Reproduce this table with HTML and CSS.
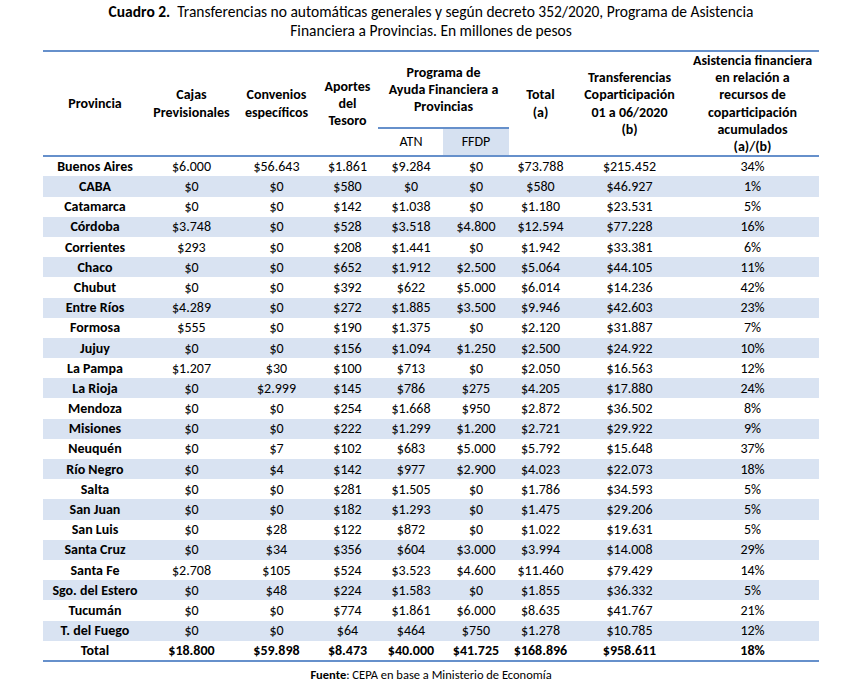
FILE: index.html
```html
<!DOCTYPE html>
<html lang="es">
<head>
<meta charset="utf-8">
<title>Cuadro 2</title>
<link rel="stylesheet" href="styles.css">
</head>
<body>
<div class="title">
  <div><b>Cuadro 2.</b>&nbsp; Transferencias no automáticas generales y según decreto 352/2020, Programa de Asistencia</div>
  <div>Financiera a Provincias. En millones de pesos</div>
</div>
<table class="data">
  <colgroup>
    <col class="c-prov"><col class="c-cajas"><col class="c-conv"><col class="c-apor"><col class="c-atn"><col class="c-ffdp"><col class="c-tot"><col class="c-transf"><col class="c-asis">
  </colgroup>
  <thead>
    <tr class="h1">
      <th rowspan="2">Provincia</th>
      <th rowspan="2">Cajas<br>Previsionales</th>
      <th rowspan="2">Convenios<br>específicos</th>
      <th rowspan="2">Aportes<br>del<br>Tesoro</th>
      <th colspan="2" class="group">Programa de<br>Ayuda Financiera a<br>Provincias</th>
      <th rowspan="2">Total<br>(a)</th>
      <th rowspan="2">Transferencias<br>Coparticipación<br>01 a 06/2020<br>(b)</th>
      <th rowspan="2">Asistencia financiera<br>en relación a<br>recursos de<br>coparticipación<br>acumulados<br>(a)/(b)</th>
    </tr>
    <tr class="h2">
      <th class="sub">ATN</th>
      <th class="sub shade">FFDP</th>
    </tr>
  </thead>
  <tbody>
    <tr><th>Buenos Aires</th><td>$6.000</td><td>$56.643</td><td>$1.861</td><td>$9.284</td><td>$0</td><td>$73.788</td><td>$215.452</td><td>34%</td></tr>
    <tr><th>CABA</th><td>$0</td><td>$0</td><td>$580</td><td>$0</td><td>$0</td><td>$580</td><td>$46.927</td><td>1%</td></tr>
    <tr><th>Catamarca</th><td>$0</td><td>$0</td><td>$142</td><td>$1.038</td><td>$0</td><td>$1.180</td><td>$23.531</td><td>5%</td></tr>
    <tr><th>Córdoba</th><td>$3.748</td><td>$0</td><td>$528</td><td>$3.518</td><td>$4.800</td><td>$12.594</td><td>$77.228</td><td>16%</td></tr>
    <tr><th>Corrientes</th><td>$293</td><td>$0</td><td>$208</td><td>$1.441</td><td>$0</td><td>$1.942</td><td>$33.381</td><td>6%</td></tr>
    <tr><th>Chaco</th><td>$0</td><td>$0</td><td>$652</td><td>$1.912</td><td>$2.500</td><td>$5.064</td><td>$44.105</td><td>11%</td></tr>
    <tr><th>Chubut</th><td>$0</td><td>$0</td><td>$392</td><td>$622</td><td>$5.000</td><td>$6.014</td><td>$14.236</td><td>42%</td></tr>
    <tr><th>Entre Ríos</th><td>$4.289</td><td>$0</td><td>$272</td><td>$1.885</td><td>$3.500</td><td>$9.946</td><td>$42.603</td><td>23%</td></tr>
    <tr><th>Formosa</th><td>$555</td><td>$0</td><td>$190</td><td>$1.375</td><td>$0</td><td>$2.120</td><td>$31.887</td><td>7%</td></tr>
    <tr><th>Jujuy</th><td>$0</td><td>$0</td><td>$156</td><td>$1.094</td><td>$1.250</td><td>$2.500</td><td>$24.922</td><td>10%</td></tr>
    <tr><th>La Pampa</th><td>$1.207</td><td>$30</td><td>$100</td><td>$713</td><td>$0</td><td>$2.050</td><td>$16.563</td><td>12%</td></tr>
    <tr><th>La Rioja</th><td>$0</td><td>$2.999</td><td>$145</td><td>$786</td><td>$275</td><td>$4.205</td><td>$17.880</td><td>24%</td></tr>
    <tr><th>Mendoza</th><td>$0</td><td>$0</td><td>$254</td><td>$1.668</td><td>$950</td><td>$2.872</td><td>$36.502</td><td>8%</td></tr>
    <tr><th>Misiones</th><td>$0</td><td>$0</td><td>$222</td><td>$1.299</td><td>$1.200</td><td>$2.721</td><td>$29.922</td><td>9%</td></tr>
    <tr><th>Neuquén</th><td>$0</td><td>$7</td><td>$102</td><td>$683</td><td>$5.000</td><td>$5.792</td><td>$15.648</td><td>37%</td></tr>
    <tr><th>Río Negro</th><td>$0</td><td>$4</td><td>$142</td><td>$977</td><td>$2.900</td><td>$4.023</td><td>$22.073</td><td>18%</td></tr>
    <tr><th>Salta</th><td>$0</td><td>$0</td><td>$281</td><td>$1.505</td><td>$0</td><td>$1.786</td><td>$34.593</td><td>5%</td></tr>
    <tr><th>San Juan</th><td>$0</td><td>$0</td><td>$182</td><td>$1.293</td><td>$0</td><td>$1.475</td><td>$29.206</td><td>5%</td></tr>
    <tr><th>San Luis</th><td>$0</td><td>$28</td><td>$122</td><td>$872</td><td>$0</td><td>$1.022</td><td>$19.631</td><td>5%</td></tr>
    <tr><th>Santa Cruz</th><td>$0</td><td>$34</td><td>$356</td><td>$604</td><td>$3.000</td><td>$3.994</td><td>$14.008</td><td>29%</td></tr>
    <tr><th>Santa Fe</th><td>$2.708</td><td>$105</td><td>$524</td><td>$3.523</td><td>$4.600</td><td>$11.460</td><td>$79.429</td><td>14%</td></tr>
    <tr><th>Sgo. del Estero</th><td>$0</td><td>$48</td><td>$224</td><td>$1.583</td><td>$0</td><td>$1.855</td><td>$36.332</td><td>5%</td></tr>
    <tr><th>Tucumán</th><td>$0</td><td>$0</td><td>$774</td><td>$1.861</td><td>$6.000</td><td>$8.635</td><td>$41.767</td><td>21%</td></tr>
    <tr><th>T. del Fuego</th><td>$0</td><td>$0</td><td>$64</td><td>$464</td><td>$750</td><td>$1.278</td><td>$10.785</td><td>12%</td></tr>
    <tr class="total"><th>Total</th><td>$18.800</td><td>$59.898</td><td>$8.473</td><td>$40.000</td><td>$41.725</td><td>$168.896</td><td>$958.611</td><td>18%</td></tr>
  </tbody>
</table>
<p class="source"><b>Fuente</b>: CEPA en base a Ministerio de Economía</p>
</body>
</html>
```

FILE: styles.css
```css
html, body {
  margin: 0;
  padding: 0;
  background: #ffffff;
}
body {
  font-family: Carlito, Lato, "Open Sans", sans-serif;
  color: #000000;
}
.title {
  text-align: center;
  font-size: 15.5px;
  line-height: 19px;
  padding-top: 2px;
}
.title b {
  font-weight: 700;
}
.data {
  width: 775px;
  margin: 10px auto 0;
  border-collapse: collapse;
  table-layout: fixed;
  font-size: 14px;
}
.c-prov { width: 103px; }
.c-cajas { width: 90px; }
.c-conv { width: 80px; }
.c-apor { width: 62px; }
.c-atn { width: 65px; }
.c-ffdp { width: 65px; }
.c-tot { width: 64px; }
.c-transf { width: 114px; }
.c-asis { width: 132px; }

.data thead {
  border-top: 2px solid #6690cb;
  border-bottom: 2px solid #6690cb;
}
.data th, .data td {
  padding: 0;
  text-align: center;
  vertical-align: middle;
  white-space: nowrap;
}
.data thead th {
  font-weight: 700;
  line-height: 17.2px;
}
.h1 { height: 75px; }
.h2 { height: 28px; }
.data thead th.sub {
  font-weight: 400;
  border-top: 2px solid #6690cb;
}
.data thead th.shade {
  background: #d6e1f1;
}
.data tbody tr {
  height: 20.2px;
}
.data tbody th {
  font-weight: 700;
}
.data tbody tr:nth-child(even) {
  background: #d9e3f2;
}
.data tbody tr.total {
  font-weight: 700;
  border-bottom: 2px solid #6690cb;
}
.data tbody tr.total td {
  font-weight: 700;
}
.source {
  margin: 5px 0 0;
  text-align: center;
  font-size: 12.5px;
}
```
